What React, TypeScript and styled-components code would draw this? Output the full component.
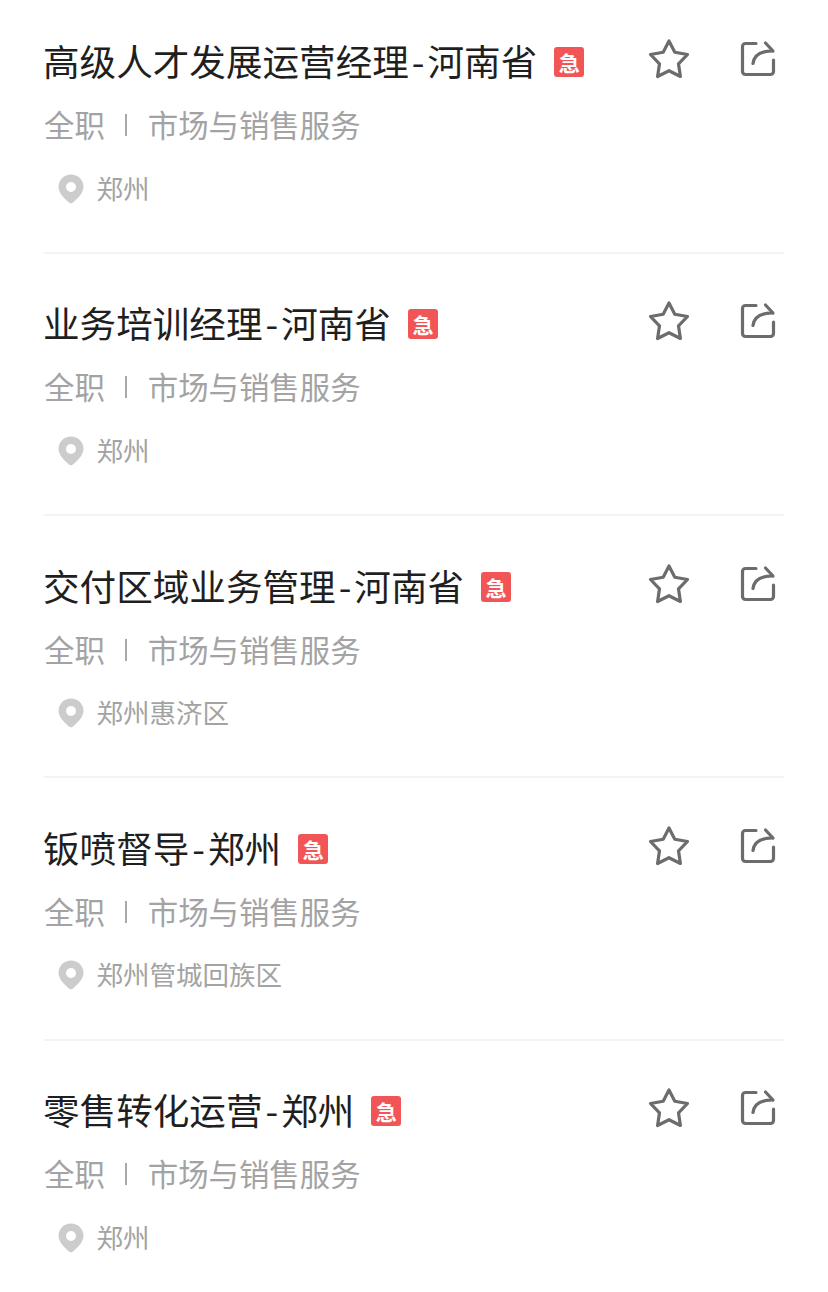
import React from 'react';
import styled, { createGlobalStyle } from 'styled-components';

interface Job {
  title: string;
  region: string;
  city: string;
}

const jobs: Job[] = [
  { title: '高级人才发展运营经理', region: '河南省', city: '郑州' },
  { title: '业务培训经理', region: '河南省', city: '郑州' },
  { title: '交付区域业务管理', region: '河南省', city: '郑州惠济区' },
  { title: '钣喷督导', region: '郑州', city: '郑州管城回族区' },
  { title: '零售转化运营', region: '郑州', city: '郑州' },
];

function StarIcon() {
  return (
    <svg width="42" height="42" viewBox="0 0 42 42" fill="none">
      <path
        d="M21 3l5.800 11.200 12.700 2.300-9 9.300 1.900 12.700L21 32.700 9.600 38.500l1.900-12.700-9-9.300 12.700-2.300z"
        stroke="#6c6c6c"
        strokeWidth="3.200"
        strokeLinejoin="round"
      />
    </svg>
  );
}

function ShareIcon() {
  return (
    <svg width="38" height="38" viewBox="0 0 38 38" fill="none" stroke="#6c6c6c" strokeWidth="3.200" strokeLinecap="round" strokeLinejoin="round">
      <path d="M17 3.500H6.500a3 3 0 0 0-3 3v25a3 3 0 0 0 3 3h25a3 3 0 0 0 3-3V20" />
      <path d="M14 23.500c1-8 7-12.500 19-12.500" />
      <path d="M26.500 3l7.500 8" />
    </svg>
  );
}

function PinIcon() {
  return (
    <PinSvg width="26" height="30" viewBox="0 0 26 30">
      <path
        fillRule="evenodd"
        fill="#cccccc"
        d="M13 .5C6 .5.500 6 .500 12.800c0 6.600 6.900 12.900 10.900 16 .9.700 2.300.700 3.200 0 4-3.100 10.900-9.400 10.900-16C25.500 6 20 .5 13 .5zm0 7.500a5 5 0 1 1 0 10 5 5 0 0 1 0-10z"
      />
    </PinSvg>
  );
}

export default function App() {
  return (
    <>
      <GlobalStyle />
      <List>
        {jobs.map((job, index) => (
          <Item key={index}>
            <TitleRow>
              <Title>
                {job.title}
                <TitleHyphen>-</TitleHyphen>
                {job.region}
              </Title>
              <UrgentBadge>急</UrgentBadge>
              <Actions>
                <ActionButton><StarIcon /></ActionButton>
                <ActionButton><ShareIcon /></ActionButton>
              </Actions>
            </TitleRow>
            <MetaRow>
              <span>全职</span>
              <MetaDivider />
              <span>市场与销售服务</span>
            </MetaRow>
            <LocationRow>
              <PinIcon />
              <LocationText>{job.city}</LocationText>
            </LocationRow>
          </Item>
        ))}
      </List>
    </>
  );
}

const GlobalStyle = createGlobalStyle`
  body {
    margin: 0;
    background: #fff;
    font-family: "Noto Sans CJK SC", "Noto Sans", sans-serif;
  }
`;

const List = styled.div`
  display: flex;
  flex-direction: column;
  padding: 0 44px;
  height: 1292px;
  box-sizing: border-box;
  overflow: hidden;
`;

const Item = styled.div`
  display: flex;
  flex-direction: column;
  height: 262.25px;
  flex-shrink: 0;
  padding-top: 42.5px;
  box-sizing: border-box;
  border-bottom: 2px solid #f3f3f3;

  &:first-child {
    height: 253.75px;
    padding-top: 34px;
  }

  &:last-child {
    border-bottom: none;
  }
`;

const TitleRow = styled.div`
  display: flex;
  align-items: center;
  height: 54px;
`;

const Title = styled.div`
  font-size: 36.6px;
  line-height: 54px;
  margin-left: -1px;
  color: #1f1f1f;
  white-space: nowrap;
`;

const TitleHyphen = styled.span`
  margin: 0 3px;
`;

const UrgentBadge = styled.span`
  display: flex;
  align-items: center;
  justify-content: center;
  width: 30px;
  height: 30px;
  margin-left: 17px;
  margin-top: 2px;
  border-radius: 3px;
  background: #f25555;
  color: #fff;
  font-size: 21px;
  font-weight: 700;
`;

const Actions = styled.div`
  display: flex;
  align-items: center;
  gap: 49px;
  margin-left: auto;
  margin-right: 7px;
  margin-top: -4px;
`;

const ActionButton = styled.div`
  display: flex;
  align-items: center;
  justify-content: center;
`;

const MetaRow = styled.div`
  display: flex;
  align-items: center;
  margin-top: 14px;
  height: 44px;
  font-size: 30.4px;
  color: #a3a3a3;
`;

const MetaDivider = styled.span`
  width: 2px;
  height: 22px;
  margin: 2px 20.5px 0;
  background: #a8a8a8;
`;

const LocationRow = styled.div`
  display: flex;
  align-items: center;
  gap: 12.5px;
  height: 40px;
  margin-top: 21px;
  padding-left: 14px;
`;

const PinSvg = styled.svg`
  margin-top: 3px;
`;

const LocationText = styled.span`
  font-size: 26.5px;
  color: #a3a3a3;
`;
